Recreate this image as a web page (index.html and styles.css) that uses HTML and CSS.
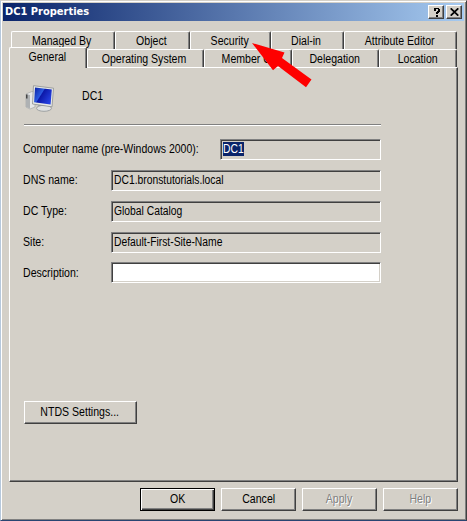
FILE: index.html
```html
<!DOCTYPE html>
<html lang="en">
<head>
<meta charset="utf-8">
<title>DC1 Properties</title>
<link rel="stylesheet" href="styles.css">
</head>
<body>
<main class="window">
  <header class="titlebar">
    <h1>DC1 Properties</h1>
    <button class="caption"><svg width="9" height="9" viewBox="0 0 9 9" shape-rendering="crispEdges"><path d="M2 0h5v1h1v3h-1v1h-1v1h-2v-2h1v-1h1v-2h-2v2h-2v-2h0zM4 7h2v2h-2z"/></svg></button>
    <button class="caption"><svg width="9" height="8" viewBox="0 0 9 8"><path d="M.7.3 8.3 7.7M8.3.3.7 7.7" stroke="#000" stroke-width="1.7"/></svg></button>
  </header>
  <nav class="tabs">
    <div class="row back">
      <span class="tab managed"><b>Managed By</b></span><span class="tab object"><b>Object</b></span><span class="tab security"><b>Security</b></span><span class="tab dialin"><b>Dial-in</b></span><span class="tab attribute"><b>Attribute Editor</b></span>
    </div>
    <div class="row front">
      <span class="tab general"><b>General</b></span><span class="tab os"><b>Operating System</b></span><span class="tab member"><b>Member Of</b></span><span class="tab delegation"><b>Delegation</b></span><span class="tab location"><b>Location</b></span>
    </div>
  </nav>
  <section class="panel">
    <div class="identity">
      <svg class="computer" width="30" height="28" viewBox="0 0 30 28">
        <defs><linearGradient id="screen" x2="1" y2=".6"><stop stop-color="#0a1fa0"/><stop offset=".45" stop-color="#2a5ae0"/><stop offset=".5" stop-color="#0c18a8"/><stop offset="1" stop-color="#2440e0"/></linearGradient></defs>
        <path d="m1 9 6-2.500 3 .5v15l-5 2-4-2z" fill="#e6e7e7" stroke="#a5a7a8" stroke-width=".7"/><path d="m1 9 4 1v13.500l-4-1.500z" fill="#aeb1b3"/><path d="M1 9.500h1.500v4H1z" fill="#444"/>
        <path d="m13 19 10 1.500v3H13z" fill="#aeb3b5"/><ellipse cx="19" cy="23.300" rx="7.500" ry="3" fill="#dfe1e1" stroke="#8f9395" stroke-width=".8"/>
        <path d="m8.500.7 20 2.500-1.500 18.600-19.500-2.800z" fill="#e7e9e7" stroke="#8d9191" stroke-width=".8"/>
        <path d="m10 2.500 16.800 2-1.200 15-16.500-2.300z" fill="url(#screen)"/>
      </svg>
      <span><b>DC1</b></span>
    </div>
    <hr>
    <div class="field first"><label><b>Computer name (pre-Windows 2000):</b></label><div class="box"><mark><b>DC1</b></mark></div></div>
    <div class="field"><label><b>DNS name:</b></label><div class="box"><b>DC1.bronstutorials.local</b></div></div>
    <div class="field"><label><b>DC Type:</b></label><div class="box"><b>Global Catalog</b></div></div>
    <div class="field"><label><b>Site:</b></label><div class="box site"><b>Default-First-Site-Name</b></div></div>
    <div class="field last"><label><b>Description:</b></label><div class="box editable"></div></div>
    <button class="button ntds"><b>NTDS Settings...</b></button>
  </section>
  <footer>
    <button class="button ok"><b>OK</b></button>
    <button class="button"><b>Cancel</b></button>
    <button class="button disabled"><b>Apply</b></button>
    <button class="button disabled"><b>Help</b></button>
  </footer>
  <svg class="arrow" width="62" height="50" viewBox="0 0 62 50"><path d="M1 4 33.500 13.500 31 19 60.500 40.500 55 48.300 27 27 22 31.300z" fill="#fe0000"/></svg>
</main>
</body>
</html>
```
FILE: styles.css
```css
* { box-sizing: border-box; }
body { margin: 0; background: #d4d0c8; }
.window {
  position: relative;
  width: 467px; height: 521px;
  padding: 2px 1px 0 2px;
  border: 1px solid;
  border-color: #d4d0c8 #404040 #294572 #b6c8dc;
  box-shadow: inset 1px 1px #fff, inset -1px -1px #808080;
  font: 12px/15px "Liberation Sans", Arial, sans-serif;
  color: #000;
  white-space: nowrap;
}
/* dialog labels are set slightly condensed */
b { display: inline-block; font-weight: normal; transform: scaleX(.88); }
.titlebar {
  display: flex; align-items: center; gap: 2px;
  width: 461px; height: 18px;
  padding: 0 2px;
  background: linear-gradient(90deg, #0a246a, #a6caf0);
}
h1 { margin: 0 auto 0 0; color: #fff; font: bold 11px/18px "DejaVu Sans Condensed", "DejaVu Sans", sans-serif; }
button { font: inherit; color: inherit; margin: 0; padding: 0; background: #d4d0c8; border: 1px solid; border-color: #fff #404040 #404040 #fff; box-shadow: inset -1px -1px #808080; }
.caption { width: 16px; height: 14px; display: flex; align-items: center; justify-content: center; }
.tabs { padding: 10px 0 0 6px; }
.row { display: flex; height: 18px; }
.back { padding-left: 2px; }
.tab { height: 18px; padding: 2px 2px 0 0; text-align: center; border: solid; border-width: 1px 1px 0; border-color: #fff #404040 #fff #fff; box-shadow: inset -1px 0 #808080; border-radius: 2px 2px 0 0; }
.managed { width: 104px; }
.object { width: 75px; }
.security { width: 81px; }
.dialin { width: 73px; }
.attribute { width: 113px; }
.general { width: 78px; height: 21px; margin-top: -2px; position: relative; z-index: 1; background: #d4d0c8; }
.os { width: 117px; }
.member { width: 88px; padding-right: 0; }
.delegation { width: 87px; }
.location { width: 78px; padding-right: 0; }
.panel { width: 449px; height: 415px; margin-left: 6px; padding: 17px 0 0 14px; border: 1px solid; border-color: #fff #404040 #404040 #fff; box-shadow: inset -1px -1px #808080; }
.panel b { transform-origin: left; }
.identity { display: flex; height: 39px; }
.identity span { margin: 4px 0 0 27px; }
.computer { margin-left: 1px; }
hr { width: 357px; height: 2px; margin: 0 0 13px; border: solid; border-width: 1px 0; border-color: #808080 transparent #fff; }
.field { display: flex; align-items: center; width: 357px; height: 21px; margin-bottom: 10px; }
.field label { width: 87px; margin-left: -1px; flex: none; }
.field .box { margin-left: 1px; }
.first label { width: 196px; }
.first label b { transform: scaleX(.875); }
.last label { padding-top: 2px; }
.box { flex: 1; height: 21px; padding: 1px 0 0 2px; line-height: 17px; border: 1px solid; border-color: #808080 #fff #fff #808080; box-shadow: inset 1px 1px #404040; }
.box b { transform: scaleX(.86); }
.editable { background: #fff; box-shadow: inset 1px 1px #404040, inset -1px -1px #d4d0c8; }
.field:has(.site) { margin-bottom: 9px; }
mark { display: block; width: 21px; height: 14px; margin-top: 1px; line-height: 14px; background: #0a246a; color: #fff; }
.ntds { display: block; width: 113px; height: 23px; margin-top: 118px; padding-right: 1px; }
.panel .ntds b { transform-origin: center; }
footer { display: flex; gap: 6px; margin: 6px 0 0 137px; }
footer .button { width: 75px; height: 23px; }
.ok { border-color: #000; box-shadow: inset 1px 1px #fff, inset -1px -1px #404040, inset -2px -2px #808080; }
.disabled { color: #808080; text-shadow: 1px 1px #fff; }
.arrow { position: absolute; left: 250px; top: 38px; z-index: 2; }
```
